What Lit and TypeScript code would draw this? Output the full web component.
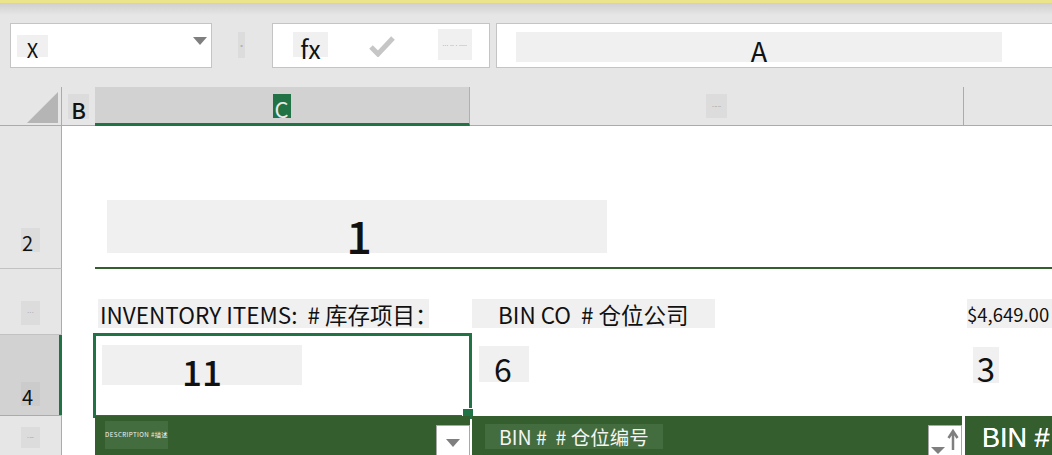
import { LitElement, html, css } from "lit";
import { customElement } from "lit/decorators.js";

const tri = html`<svg class="tri" width="14" height="8" viewBox="0 0 14 8"><path d="M0 0H14L7 8Z" fill="#7f7f7f"/></svg>`;

@customElement("app-root")
export class AppRoot extends LitElement {
  static styles = css`
    :host { display: block; width: 1052px; height: 455px; overflow: hidden; background: #fff; font-family: "Noto Sans CJK SC", "Noto Sans", sans-serif; color: #111; }
    * { box-sizing: border-box; }
    .ribbon { height: 87px; display: flex; align-items: flex-start; padding: 20px 0 0 10px; border-top: 3px solid #ece48c; background: linear-gradient(#cfcfcf 0, #e6e6e6 12px); }
    .box { height: 45px; background: #fff; border: 1px solid #c4c4c4; display: flex; position: relative; }
    .patch { background: #f0f0f0; display: flex; align-items: flex-end; justify-content: center; line-height: 1; }
    .name { width: 202px; align-items: flex-start; padding: 0 4px 0 6px; }
    .name .patch { width: 31px; height: 22px; margin-top: 11px; font-size: 20px; line-height: .76; }
    .name .tri { margin-left: auto; margin-top: 13px; }
    .grip { width: 7px; height: 26px; margin: 9px 27px 0 26px; background: #dcdcdc; font-size: 4px; color: #222; display: flex; align-items: center; justify-content: center; }
    .fx { width: 218px; align-items: flex-start; padding-left: 20px; }
    .fx .f { width: 35px; height: 25px; margin-top: 8px; font-size: 25px; line-height: .74; }
    .fx svg { margin: 11px 0 0 41px; }
    .fx .more { width: 34px; height: 31px; margin: 5px 0 0 43px; align-items: center; font-size: 4px; letter-spacing: .6px; color: #222; white-space: nowrap; }
    .input { flex: 1; margin-left: 6px; border-right: 0; padding-left: 19px; }
    .input .patch { width: 486px; height: 30px; margin-top: 8px; font-size: 27px; line-height: .82; }

    .sheet { display: grid; grid-template-columns: 62px 33px 375px 494px 88px; grid-template-rows: 39px 143px 66px 81px 39px; }
    .hd { background: #e6e6e6; border-bottom: 1px solid #ababab; display: flex; align-items: flex-start; justify-content: center; padding-top: 7px; }
    .corner { border-right: 1px solid #ababab; padding: 5px 3px 0 0; justify-content: flex-end; }
    .hd.b .patch { width: 21px; height: 25px; background: #dcdcdc; font-size: 22px; line-height: .85; font-weight: 500; }
    .hd.c { background: #d2d2d2; border-bottom: 3px solid #217346; border-right: 1px solid #b0b0b0; padding-right: 1px; }
    .hd.c .patch { width: 18px; height: 24px; background: #217346; color: #e8e8e8; font-size: 22px; line-height: .85; }
    .hd.d { border-right: 1px solid #ababab; }
    .hd.d .patch { width: 21px; height: 24px; background: #dcdcdc; font-size: 4px; align-items: center; color: #333; }
    .rh { background: #e6e6e6; border-right: 1px solid #ababab; border-bottom: 1px solid #c2c2c2; display: flex; align-items: flex-end; padding-left: 21px; }
    .rh .patch { width: 19px; background: #dcdcdc; font-size: 20px; line-height: .9; justify-content: flex-start; padding-left: 1px; }
    .rh.r2 .patch { height: 24px; margin-bottom: 16px; }
    .rh.r3 .patch { height: 24px; margin-bottom: 9px; font-size: 4px; align-items: center; justify-content: center; color: #444; padding: 0; }
    .rh.r4 { background: #d2d2d2; position: relative; border-bottom-color: #ababab; }
    .rh.r4 .patch { height: 24px; background: #cbcbcb; margin-bottom: 9px; }
    .rh.r4::after { content: ""; position: absolute; right: -1px; top: 0; bottom: 0; width: 3px; background: #217346; }
    .rh.r5 { align-items: flex-start; padding-top: 11px; border-bottom: 0; }
    .rh.r5 .patch { height: 21px; font-size: 4px; align-items: center; justify-content: center; color: #444; padding: 0; }

    .title { grid-column: 3 / 6; border-bottom: 2px solid #355e2f; padding: 74px 0 0 12px; }
    .title .patch { width: 500px; height: 53px; font-size: 45px; line-height: .8; font-weight: 500; padding-left: 4px; }
    .c3 { display: flex; align-items: flex-start; padding-top: 30px; font-size: 22.5px; }
    .c3 .patch { height: 29px; align-items: center; white-space: pre; justify-content: flex-start; padding-top: 2px; }
    .inv { padding-left: 3px; }
    .inv .patch { width: 331px; padding-left: 2px; }
    .bin { padding-left: 2px; }
    .bin .patch { width: 243px; padding-left: 26px; }
    .amt { padding-left: 3px; }
    .amt .patch { width: 85px; font-size: 18.5px; overflow: hidden; }
    .sel { position: relative; padding: 10px 0 0 7px; }
    .sel::before { content: ""; position: absolute; inset: -2px; border: 3px solid #217346; }
    .sel::after { content: ""; position: absolute; right: -4px; bottom: -4px; width: 10px; height: 10px; background: #217346; border: 1px solid #fff; }
    .sel .patch { width: 200px; height: 40px; font-size: 35px; line-height: .76; font-weight: 500; }
    .six { padding: 11px 0 0 9px; }
    .six .patch { width: 50px; height: 36px; font-size: 32px; line-height: .84; padding-right: 2px; }
    .three { padding: 12px 0 0 9px; }
    .three .patch { width: 26px; height: 36px; font-size: 33px; line-height: .84; }
    .hg { background: #355e2f; color: #fff; position: relative; display: flex; align-items: flex-start; }
    .hg.g1 { padding: 5px 0 0 10px; }
    .hg.g1 .patch { width: 63px; height: 28px; background: #436d3e; align-items: center; font-size: 6.2px; letter-spacing: .4px; color: #f4f4f4; white-space: nowrap; }
    .hg.g2 { margin: 0 2px 0 2px; padding: 8px 0 0 13px; }
    .hg.g2 .patch { width: 178px; height: 25px; background: #436d3e; align-items: center; justify-content: flex-start; font-size: 19.5px; color: #f4f4f4; padding-left: 14px; white-space: pre; }
    .hg.g3 { border-left: 3px solid #fff; margin-left: -2px; padding: 0 0 0 17px; font: 400 27px "Liberation Sans", sans-serif; line-height: 45px; white-space: nowrap; text-shadow: 0 0 .6px #fff; }
    .filter { position: absolute; top: 9px; width: 34px; height: 34px; background: #fff; border: 1px solid #a8a8a8; display: flex; align-items: flex-start; justify-content: center; padding-top: 13px; }
    .g1 .filter { right: 0; }
    .g2 .filter { right: 0; padding: 2px 0 0 0; }
  `;

  render() {
    return html`
      <div class="ribbon">
        <div class="box name"><div class="patch">X</div>${tri}</div>
        <div class="grip">::</div>
        <div class="box fx">
          <div class="patch f">fx</div>
          <svg width="26" height="22" viewBox="0 0 26 22"><path d="M2 12L9 19L24 3" fill="none" stroke="#c6c6c6" stroke-width="5"/></svg>
          <div class="patch more">--- -- - ----</div>
        </div>
        <div class="box input"><div class="patch">A</div></div>
      </div>
      <div class="sheet">
        <div class="hd corner"><svg width="31" height="31" viewBox="0 0 31 31"><path d="M31 0V31H0Z" fill="#b5b5b5"/></svg></div>
        <div class="hd b"><div class="patch">B</div></div>
        <div class="hd c"><div class="patch">C</div></div>
        <div class="hd d"><div class="patch">- -- --</div></div>
        <div class="hd"></div>

        <div class="rh r2"><div class="patch">2</div></div>
        <div></div>
        <div class="title"><div class="patch">1</div></div>

        <div class="rh r3"><div class="patch">- - -</div></div>
        <div></div>
        <div class="c3 inv"><div class="patch">INVENTORY ITEMS:  # 库存项目：</div></div>
        <div class="c3 bin"><div class="patch">BIN CO  # 仓位公司</div></div>
        <div class="c3 amt"><div class="patch">$4,649.00</div></div>

        <div class="rh r4"><div class="patch">4</div></div>
        <div></div>
        <div class="sel"><div class="patch">11</div></div>
        <div class="six"><div class="patch">6</div></div>
        <div class="three"><div class="patch">3</div></div>

        <div class="rh r5"><div class="patch">- ---</div></div>
        <div></div>
        <div class="hg g1">
          <div class="patch">DESCRIPTION #描述</div>
          <div class="filter">${tri}</div>
        </div>
        <div class="hg g2">
          <div class="patch">BIN #  # 仓位编号</div>
          <div class="filter"><svg width="30" height="26" viewBox="0 0 30 26"><path d="M1 19H15L8 26Z" fill="#7f7f7f"/><path d="M23 22V4M18.500 10L23 3L27.500 10" fill="none" stroke="#7f7f7f" stroke-width="2.500"/></svg></div>
        </div>
        <div class="hg g3">BIN #</div>
      </div>
    `;
  }
}
